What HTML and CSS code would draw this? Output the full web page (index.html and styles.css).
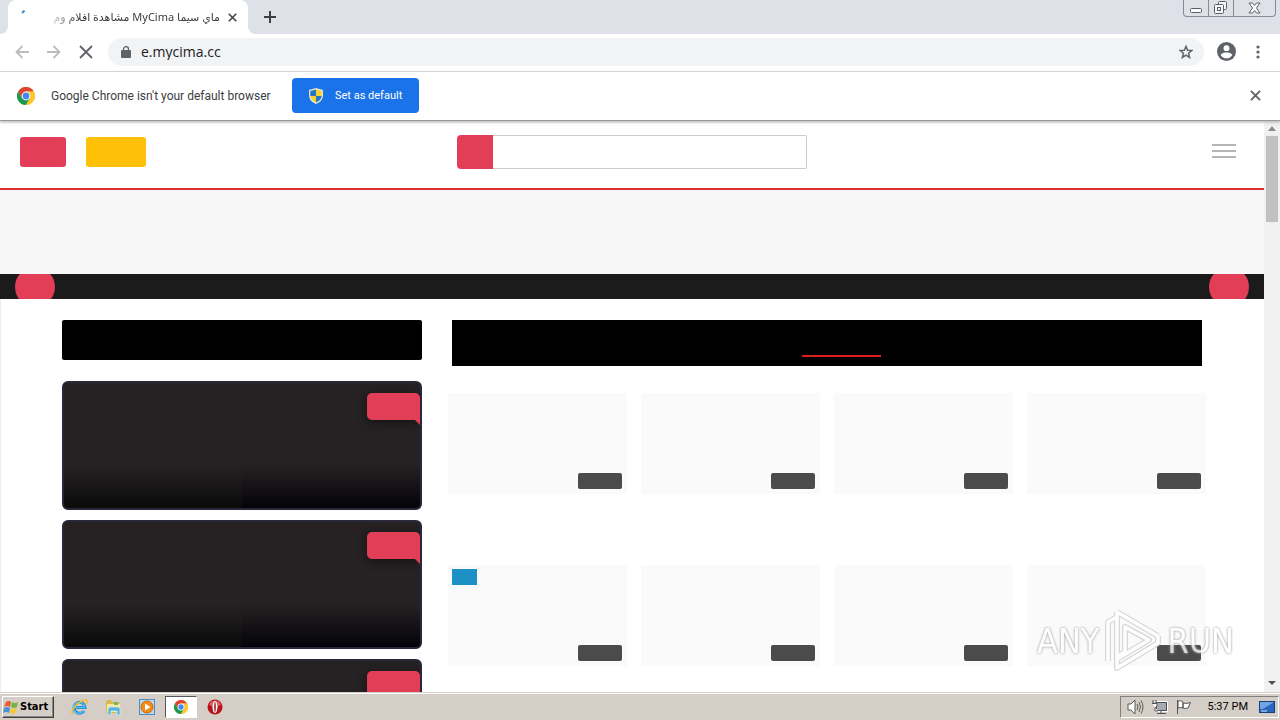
FILE: index.html
```html
<!DOCTYPE html>
<html lang="en">
<head>
<meta charset="utf-8">
<title>MyCima</title>
<link rel="stylesheet" href="styles.css">
</head>
<body>
<svg class="defs" aria-hidden="true">
  <symbol id="chrome" viewBox="0 0 18 18">
    <circle cx="9" cy="9" r="9" fill="#fbc72e"/>
    <path d="M1.2 4.5A9 9 0 0 1 16.8 4.5H9L5.1 11.2Z" fill="#de4435"/>
    <path d="M1.2 4.5A9 9 0 0 0 9 18L12.9 11.2H5.1Z" fill="#189a55"/>
    <path d="M16.8 4.5A9 9 0 0 1 9 18L12.9 11.2 9 4.5Z" fill="#fbc72e"/>
    <circle cx="9" cy="9" r="4.4" fill="#fff"/><circle cx="9" cy="9" r="3.4" fill="#4688f1"/>
  </symbol>
  <symbol id="cross" viewBox="0 0 12 12"><path d="M1 1L11 11M11 1L1 11" stroke="currentColor" fill="none" stroke-width="2"/></symbol>
</svg>

<header class="tabstrip">
  <div class="tab-edge"></div>
  <div class="tab">
    <svg class="spinner" viewBox="0 0 4 4"><path d="M3.5 .5L1 3" stroke="#3f8fc4" stroke-width="2"/></svg>
    <span class="tab-title" dir="rtl">ماي سيما MyCima مشاهدة افلام وم</span>
    <button class="icon-btn tab-close" aria-label="Close tab"><svg width="9" height="9"><use href="#cross"/></svg></button>
  </div>
  <button class="icon-btn new-tab" aria-label="New tab"><svg width="12" height="12" viewBox="0 0 12 12"><path d="M6 0V12M0 6H12" stroke="#3c4043" stroke-width="2"/></svg></button>
  <div class="window-controls">
    <button aria-label="Minimize"><svg width="12" height="12" viewBox="0 0 12 12"><rect x=".5" y="6.500" width="11" height="4" rx="1" fill="#fff" stroke="#5b6068"/></svg></button>
    <button aria-label="Restore"><svg width="14" height="14" viewBox="0 0 14 14"><g fill="#f5f6f8" stroke="#5b6068"><rect x="4.500" y=".5" width="8" height="8" rx="1"/><rect x=".5" y="3.500" width="9" height="9" rx="1"/><rect x="3.500" y="6.500" width="3" height="3"/></g></svg></button>
    <button class="wide" aria-label="Close"><svg width="13" height="12" viewBox="0 0 13 12"><path d="M1 1H4.500L6.500 3.500 8.500 1H12L8.500 6 12 11H8.500L6.500 8.500 4.500 11H1L4.500 6Z" fill="#fff" stroke="#5b6068"/></svg></button>
  </div>
</header>

<nav class="toolbar">
  <button class="icon-btn faded" aria-label="Back"><svg width="14" height="14" viewBox="0 0 14 14"><path d="M14 7H1.500M7.500 1L1.500 7 7.500 13" fill="none" stroke="currentColor" stroke-width="1.800"/></svg></button>
  <button class="icon-btn faded" aria-label="Forward"><svg width="14" height="14" viewBox="0 0 14 14"><path d="M0 7H12.500M6.500 1L12.500 7 6.500 13" fill="none" stroke="currentColor" stroke-width="1.800"/></svg></button>
  <button class="icon-btn" aria-label="Stop"><svg width="14" height="14" viewBox="0 0 14 14"><path d="M1 1L13 13M13 1L1 13" fill="none" stroke="currentColor" stroke-width="1.800"/></svg></button>
  <div class="omnibox">
    <svg width="10" height="12" viewBox="0 0 10 12"><rect y="4" width="10" height="8" rx="1" fill="#5f6368"/><path d="M2.500 5V3a2.500 2.300 0 0 1 5 0V5" fill="none" stroke="#5f6368" stroke-width="1.300"/></svg>
    <input type="text" value="e.mycima.cc" aria-label="Address">
    <button class="icon-btn" aria-label="Bookmark"><svg width="14" height="14" viewBox="0 0 14 14"><path d="M7 1.300L8.600 5.200 12.900 5.500 9.600 8.300 10.600 12.500 7 10.200 3.400 12.500 4.400 8.300 1.100 5.500 5.400 5.200Z" fill="none" stroke="currentColor" stroke-width="1.500"/></svg></button>
  </div>
  <button class="icon-btn" aria-label="Profile"><svg width="19" height="19" viewBox="0 0 20 20"><circle cx="10" cy="10" r="10" fill="#5f6368"/><circle cx="10" cy="6.500" r="3.100" fill="#fff"/><path d="M3.800 13.800C5 11.600 8 11 10 11s5 .6 6.200 2.800A7.400 7.400 0 0 1 3.800 13.800Z" fill="#fff"/></svg></button>
  <button class="icon-btn menu" aria-label="Menu"><svg width="4" height="14" viewBox="0 0 4 14"><g fill="#5f6368"><circle cx="2" cy="2" r="1.600"/><circle cx="2" cy="7" r="1.600"/><circle cx="2" cy="12" r="1.600"/></g></svg></button>
</nav>

<section class="infobar">
  <svg width="18" height="18"><use href="#chrome"/></svg>
  <span class="message">Google Chrome isn't your default browser</span>
  <button class="set-default">
    <svg width="14" height="16" viewBox="0 0 14 16"><path d="M7 0L14 2V7C14 11.500 11 14.500 7 16 3 14.500 0 11.500 0 7V2Z" fill="#e8e5c9"/><path d="M7 1.500V8H1.300V3Z" fill="#2675c8"/><path d="M7 1.500L12.700 3V8H7Z" fill="#f8d432"/><path d="M1.300 8H7V14.500C4 13.200 1.600 11 1.300 8Z" fill="#f8d432"/><path d="M7 8H12.700C12.400 11 10 13.200 7 14.500Z" fill="#2675c8"/></svg>
    Set as default
  </button>
  <button class="icon-btn dismiss" aria-label="Dismiss"><svg width="11" height="11"><use href="#cross"/></svg></button>
</section>

<div class="viewport">
  <div class="page">
    <header class="site-header">
      <div class="actions"><button class="login" aria-label="Login"></button><button class="join" aria-label="Join"></button></div>
      <form class="search"><button type="button" aria-label="Search"></button><input type="text" aria-label="Search films"></form>
      <button class="burger" aria-label="Site menu"><i></i><i></i><i></i></button>
    </header>
    <div class="banner"></div>
    <div class="slider"><button aria-label="Previous"></button><button aria-label="Next"></button></div>
    <div class="content">
      <aside class="sidebar">
        <div class="side-title"></div>
        <article class="feature"><span class="ribbon"></span></article>
        <article class="feature"><span class="ribbon"></span></article>
        <article class="feature"><span class="ribbon"></span></article>
      </aside>
      <main class="main">
        <div class="main-title"><span></span></div>
        <div class="grid">
          <article><b></b></article><article><b></b></article><article><b></b></article><article><b></b></article>
          <article><em></em><b></b></article><article><b></b></article><article><b></b></article><article><b></b></article>
        </div>
      </main>
    </div>
  </div>
  <div class="scrollbar">
    <svg width="16" height="14" viewBox="0 0 16 14"><path d="M4 10L8 5 12 10Z" fill="#8c8c8c"/></svg>
    <div class="thumb"></div>
    <svg class="down" width="16" height="18" viewBox="0 0 16 18"><path d="M4 7H12L8 11Z" fill="#505050"/></svg>
  </div>
  <div class="watermark">
    <span>ANY</span>
    <svg width="58" height="64" viewBox="0 0 58 64" fill="none" stroke-linejoin="round"><g stroke="#cfcfcf" stroke-width="6"><path d="M13 3L54 27M13 3V48L21 43V18L45 31 13 50V59L54 34V27M4 52V13L13 8"/></g><g stroke="#fff" stroke-width="3.500"><path d="M13 3L54 27M13 3V48L21 43V18L45 31 13 50V59L54 34V27M4 52V13L13 8"/></g></svg>
    <span>RUN</span>
  </div>
</div>

<footer class="taskbar">
  <button class="start"><svg width="16" height="15" viewBox="0 0 16 15"><path d="M3 2Q6 0 8 2L7 7Q4 5 1 7Z" fill="#e85d2d"/><path d="M9 2Q12 4 15 2L14 7Q11 9 8 7Z" fill="#71b744"/><path d="M1 8Q4 6 7 8L6 13Q3 11 0 13Z" fill="#4793d5"/><path d="M8 8Q11 10 14 8L12 13Q10 15 7 13Z" fill="#f5c92f"/></svg>Start</button>
  <div class="apps">
    <button aria-label="Internet Explorer"><svg width="17" height="17" viewBox="0 0 17 17" fill="none"><path d="M13 12A5.500 5.500 0 1 1 14 8.500H4" stroke="#1b87ce" stroke-width="3"/><path d="M12.500 12A5.500 5.500 0 1 1 13.500 8.500H4" stroke="#55bdf0" stroke-width="1.500"/><path d="M2 15C-1 13 4 5 11 2 17-.5 17 2 15 5" stroke="#edbd32" stroke-width="1.500"/></svg></button>
    <button aria-label="Explorer"><svg width="17" height="17" viewBox="0 0 17 17"><path d="M1 3L2 1H6L7 3H14L15 5V14H1Z" fill="#d9b851"/><path d="M2 5H15V13H2Z" fill="#f8e7a0"/><path d="M9 3H13V6H9Z" fill="#75b85c"/><path d="M3 16V10Q3 8 5 8H13Q15 8 15 10V16H12V12H6V16Z" fill="#55b4dc" stroke="#d6eff9" stroke-width=".7"/></svg></button>
    <button aria-label="Media Player"><svg width="17" height="17" viewBox="0 0 17 17"><rect x=".5" y=".5" width="15" height="15" fill="#b9d9ef" stroke="#4c8bc4"/><circle cx="8" cy="8" r="6" fill="#f28b17" stroke="#d26500"/><path d="M6 4.500L11.500 8 6 11.500Z" fill="#fff"/></svg></button>
    <button class="active" aria-label="Chrome"><svg width="14" height="14"><use href="#chrome"/></svg></button>
    <button aria-label="Opera"><svg width="16" height="16" viewBox="0 0 16 16"><circle cx="8" cy="8" r="7.500" fill="#b91219"/><path d="M2 6A6.300 6.300 0 0 1 14 6Q8 9 2 6Z" fill="#db5a5b"/><ellipse cx="8" cy="8" rx="2.500" ry="6" fill="#fff"/><ellipse cx="8" cy="8" rx="1" ry="5" fill="#a9484b"/></svg></button>
  </div>
  <div class="tray">
    <svg width="17" height="16" viewBox="0 0 17 16" fill="none" stroke="#595959"><path d="M1 5H4L8 1V15L4 11H1Z" fill="#fff"/><path d="M10 5Q12 8 10 11M12 3Q15 8 12 13M14 1.500Q18 8 14 14.500"/></svg>
    <svg width="17" height="16" viewBox="0 0 17 16" stroke="#505050"><rect x="5.500" y="3.500" width="10" height="8" fill="#a5abb1" stroke="#fff" stroke-width="3"/><rect x="5.500" y="3.500" width="10" height="8" fill="#a5abb1"/><path d="M6 14.500H15M10 12V14M2 1V4M5 1V4M1 4.500H6V7L4 9V12H7" fill="#fff"/></svg>
    <svg width="17" height="16" viewBox="0 0 17 16" stroke="#555" fill="#fff"><path d="M2.500 1V15M3 2Q6 1 8 3V9Q6 8 3 9ZM8 4Q12 5 15.500 3.500L13 9Q10 10 8 9Z"/></svg>
    <time>5:37 PM</time>
    <svg width="16" height="14" viewBox="0 0 16 14"><rect x=".5" y="1.500" width="15" height="11" fill="#2a66bd" stroke="#1c3e79"/><path d="M1 2H15L4 9H1Z" fill="#6fa5e6"/><path d="M2 11H8" stroke="#cde1f8"/></svg>
  </div>
</footer>
</body>
</html>
```
FILE: styles.css
```css
* { box-sizing: border-box; }
body { margin: 0; height: 100vh; display: flex; flex-direction: column; overflow: hidden; background: #fff; color: #3c4043; font: 12px/16px "Noto Sans", "DejaVu Sans", sans-serif; }
button, input { margin: 0; padding: 0; border: 0; background: none; font: inherit; color: inherit; }
svg { display: block; flex-shrink: 0; }
.defs { position: absolute; width: 0; height: 0; }
.icon-btn { display: flex; align-items: center; justify-content: center; flex-shrink: 0; color: #5f6368; }

.tabstrip { display: flex; flex: 0 0 34px; background: #dee1e8; }
.tab-edge { width: 8px; background: #fff; }
.tab-edge::before { content: ""; display: block; height: 100%; background: #dee1e8; border-radius: 0 0 8px 0; }
.tab { position: relative; display: flex; align-items: center; width: 240px; padding: 0 10px 0 13px; background: #fff; border-radius: 8px 8px 0 0; }
.tab::after { content: ""; position: absolute; left: 100%; bottom: 0; width: 8px; height: 8px; background: radial-gradient(circle at 100% 0, #dee1e8 8px, #fff 8px); }
.spinner { width: 4px; height: 4px; align-self: flex-start; margin-top: 10px; }
.tab-title { flex: 1; margin-left: 21px; white-space: nowrap; font: 11px/18px "Noto Sans", "DejaVu Sans", sans-serif; -webkit-mask-image: linear-gradient(90deg, transparent, #000 32px); mask-image: linear-gradient(90deg, transparent, #000 32px); }
.tab-close { width: 12px; margin-left: 6px; color: #3c4043; }
.new-tab { width: 28px; margin-left: 8px; }
.window-controls { display: flex; height: 17px; margin: 0 4px 0 auto; border: 1px solid #868b93; border-top: 0; border-radius: 0 0 4px 4px; }
.window-controls button { display: flex; justify-content: center; align-items: center; width: 25px; border-right: 1px solid #868b93; }
.window-controls .wide { width: 41px; border: 0; }

.toolbar { display: flex; align-items: center; flex: 0 0 38px; padding: 0 10px 2px 6px; border-bottom: 1px solid #dcdee1; }
.toolbar > .icon-btn { width: 32px; height: 28px; }
.toolbar > .faded { color: #babcbe; }
.omnibox { display: flex; align-items: center; flex: 1; height: 28px; margin: 0 6px; padding: 0 11px 0 13px; border-radius: 14px; background: #f1f3f5; }
.omnibox input { flex: 1; min-width: 0; margin-left: 10px; font-family: "Open Sans", sans-serif; font-size: 14px; outline: 0; color: #202124; }
.toolbar > .menu { width: 24px; margin-left: 4px; }

.infobar { position: relative; z-index: 2; display: flex; align-items: center; flex: 0 0 49px; padding: 0 19px 1px 17px; border-bottom: 1px solid #999; box-shadow: 0 1px 3px #aaa; background: #fff; }
.message { min-width: 228px; margin: 0 13px 0 16px; white-space: nowrap; font-family: Roboto, sans-serif; }
.set-default { display: flex; align-items: center; gap: 12px; height: 35px; min-width: 127px; padding: 0 16px 0 17px; border-radius: 4px; background: #1a73e8; color: #fff; font-family: Roboto, sans-serif; font-size: 11px; white-space: nowrap; }
.dismiss { margin-left: auto; }

.viewport { position: relative; display: flex; flex: 1; min-height: 0; }
.page { flex: 1; min-width: 0; overflow: hidden; }
.site-header { display: grid; grid-template-columns: 1fr 350px 1fr; align-items: center; height: 69px; padding: 0 28px 5px; border-bottom: 2px solid #dc3130; }
.actions { display: flex; gap: 20px; margin-left: -8px; }
.actions button { height: 30px; border-radius: 3px; }
.login { width: 46px; background: #e33e58; }
.join { width: 60px; background: #fec107; }
.search { display: flex; height: 34px; margin: 0; }
.search button { width: 36px; background: #e33e58; border-radius: 4px 0 0 4px; }
.search input { flex: 1; min-width: 0; border: 1px solid #ccc; border-left: 0; border-radius: 0 2px 2px 0; }
.burger { display: grid; gap: 4px; width: 24px; padding-bottom: 2px; justify-self: end; }
.burger i { height: 2px; background: #b5b5b5; }
.banner { height: 84px; background: #f7f7f7; }
.slider { display: flex; justify-content: space-between; align-items: center; height: 25px; padding: 0 15px; overflow: hidden; background: #1b1b1b; }
.slider button { flex-shrink: 0; width: 40px; height: 40px; border-radius: 50%; background: #e33e58; }
.content { display: grid; grid-template-columns: 360fr 750fr; gap: 30px; padding: 21px 62px 0 61px; border-left: 1px solid #eee; }
.side-title { height: 40px; margin-bottom: 21px; border-radius: 2px; background: #000; }
.feature { position: relative; height: 129px; margin-bottom: 10px; overflow: hidden; border: 2px solid #29273a; border-radius: 6px; background: linear-gradient(transparent 65%, #0a0a0a) left / 50% 100% no-repeat, linear-gradient(transparent 65%, #040309) right / 50% 100% no-repeat, #262223; }
.ribbon { position: absolute; top: 10px; right: 0; width: 53px; height: 27px; border-radius: 5px 5px 0 5px; background: #e33e58; box-shadow: 0 2px 10px #111; }
.ribbon::after { content: ""; position: absolute; right: 0; top: 100%; border-top: 5px solid #e33e58; border-left: 5px solid transparent; }
.main-title { display: flex; justify-content: center; align-items: flex-end; height: 46px; padding: 0 0 9px 29px; background: #000; }
.main-title span { width: 79px; height: 2px; background: #e01d1a; }
.grid { display: grid; grid-template-columns: repeat(4, 1fr); gap: 71px 14px; margin: 27px -4px 0; }
.grid article { position: relative; height: 101px; background: #fafafa; }
.grid b { position: absolute; right: 5px; bottom: 5px; width: 44px; height: 16px; border-radius: 2px; background: #4b4b4b; }
.grid em { position: absolute; left: 4px; top: 4px; width: 25px; height: 16px; background: #1d90c6; }
.scrollbar { display: flex; flex-direction: column; width: 16px; background: #f1f1f1; }
.thumb { height: 86px; margin: 1px 2px 0; background: #c1c1c1; }
.down { margin-top: auto; }
.watermark { position: absolute; right: 46px; bottom: 19px; display: flex; align-items: center; gap: 5px; opacity: .8; color: #fff; font: 34px/40px "Liberation Sans Narrow", "DejaVu Sans Condensed", "Liberation Sans", sans-serif; text-shadow: 0 0 2px #999, 0 0 3px #aaa; }

.taskbar { display: flex; align-items: center; flex: 0 0 28px; padding: 1px 1px 0 2px; border-top: 1px solid #d4d0c8; box-shadow: inset 0 1px #fff; background: #d5cec6; color: #000; }
.start { display: flex; align-items: center; gap: 1px; height: 22px; width: 52px; border: 1px solid; border-color: #fff #404040 #404040 #fff; box-shadow: inset -1px -1px #888; font: bold 11px/16px "DejaVu Sans Condensed", "DejaVu Sans", sans-serif; }
.apps { display: flex; align-items: center; margin-left: 8px; }
.apps button { display: flex; justify-content: center; align-items: center; width: 34px; height: 22px; }
.apps .active { width: 32px; margin: 0 1px; border: 1px solid; border-color: #555 #fff #fff #555; background: #fff; }
.tray { display: flex; align-items: center; gap: 7px; height: 22px; margin-left: auto; padding: 0 3px 0 6px; border: 1px solid; border-color: #808080 #fff #fff #808080; }
.tray time { margin: 0 4px 0 9px; font: 11px/16px Roboto, sans-serif; white-space: nowrap; }
```
